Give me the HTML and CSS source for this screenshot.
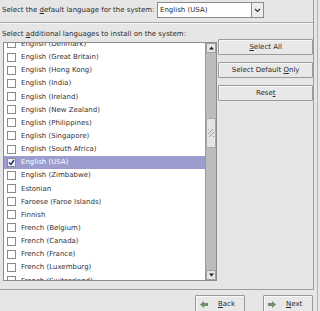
FILE: index.html
```html
<!DOCTYPE html>
<html lang="en">
<head>
  <meta charset="UTF-8">
  <title>Language Support</title>
  <link rel="stylesheet" href="styles.css">
</head>
<body>
  <div class="page">
    <div class="frame">
      <div class="default-row">
        <span class="label">Select the <u>d</u>efault language for the system:</span>
        <div class="combo">
          <div class="combo-text">English (USA)</div>
          <div class="combo-btn">
            <svg width="7" height="5" viewBox="0 0 7 5"><path d="M1 1 L3.5 3.5 L6 1" fill="none" stroke="#333" stroke-width="1.2"/></svg>
          </div>
        </div>
      </div>
      <div class="sep"></div>
      <div class="label additional">Select <u>a</u>dditional languages to install on the system:</div>
      <div class="main">
        <div class="list">
          <div class="rows">
            <div class="rows-inner" id="rows"></div>
          </div>
          <div class="scrollbar">
            <div class="arrow">
              <svg width="5" height="4" viewBox="0 0 5 4"><path d="M0 3.5 L2.5 0.5 L5 3.5 Z" fill="#222"/></svg>
            </div>
            <div class="track">
              <div class="thumb"><div class="grip"></div></div>
            </div>
            <div class="arrow">
              <svg width="5" height="4" viewBox="0 0 5 4"><path d="M0 0.5 L2.5 3.5 L5 0.5 Z" fill="#222"/></svg>
            </div>
          </div>
        </div>
        <div class="actions">
          <button class="btn"><u>S</u>elect All</button>
          <button class="btn">Select Default <u>O</u>nly</button>
          <button class="btn">Rese<u>t</u></button>
        </div>
      </div>
    </div>
    <div class="nav">
      <button class="btn nav-btn">
        <svg width="8" height="7" viewBox="0 0 8 7"><path d="M0 3.5 L4 0 L4 2 L8 2 L8 5 L4 5 L4 7 Z" fill="#6f8f6a"/></svg>
        <span><u>B</u>ack</span>
      </button>
      <button class="btn nav-btn">
        <svg width="8" height="7" viewBox="0 0 8 7"><path d="M8 3.5 L4 0 L4 2 L0 2 L0 5 L4 5 L4 7 Z" fill="#6f8f6a"/></svg>
        <span><u>N</u>ext</span>
      </button>
    </div>
  </div>

  <script>
    const languages = [
      'English (Denmark)', 'English (Great Britain)', 'English (Hong Kong)',
      'English (India)', 'English (Ireland)', 'English (New Zealand)',
      'English (Philippines)', 'English (Singapore)', 'English (South Africa)',
      'English (USA)', 'English (Zimbabwe)', 'Estonian',
      'Faroese (Faroe Islands)', 'Finnish', 'French (Belgium)',
      'French (Canada)', 'French (France)', 'French (Luxemburg)',
      'French (Switzerland)'
    ];
    const rows = document.getElementById('rows');

    languages.forEach(name => {
      const row = document.createElement('div');
      row.className = 'row';
      const box = document.createElement('span');
      box.className = 'check';
      if (name === 'English (USA)') {
        row.classList.add('selected');
        box.innerHTML = '<svg width="7" height="7" viewBox="0 0 7 7"><path d="M1 3.5 L3 5.5 L6 1" fill="none" stroke="#1a2a6a" stroke-width="1.4"/></svg>';
      }
      const text = document.createElement('span');
      text.textContent = name;
      row.appendChild(box);
      row.appendChild(text);
      rows.appendChild(row);
    });
  </script>
</body>
</html>
```

FILE: styles.css
```css
body {
  margin: 0;
  width: 320px;
  height: 311px;
  overflow: hidden;
  background-color: #e6e6e6;
  font-family: "DejaVu Sans", sans-serif;
  font-size: 7px;
  color: #2a2a2a;
}
u {
  text-decoration: underline;
  text-underline-offset: 1px;
}
.page {
  width: 317px;
  border-right: 1px solid #b4b4b4;
}
.frame {
  width: 313px;
  height: 289px;
  border-right: 1px solid #9c9c9c;
  border-bottom: 1px solid #9c9c9c;
  display: flex;
  flex-direction: column;
}
.default-row {
  display: flex;
  align-items: center;
  height: 16px;
  margin-top: 2px;
  padding-left: 2px;
}
.label {
  white-space: nowrap;
}
.combo {
  display: flex;
  margin-left: auto;
  margin-right: 49px;
  height: 16px;
}
.combo-text {
  width: 91px;
  background: #fff;
  border: 1px solid #8c8c8c;
  display: flex;
  align-items: center;
  padding-left: 2px;
}
.combo-btn {
  width: 11px;
  border: 1px solid #8c8c8c;
  border-left: none;
  background: #ececec;
  display: flex;
  align-items: center;
  justify-content: center;
}
.sep {
  margin-top: 4px;
  height: 1px;
  background: #a8a8a8;
  border-bottom: 1px solid #f8f8f8;
}
.additional {
  margin-top: 6px;
  padding-left: 2px;
  height: 8px;
  line-height: 8px;
}
.main {
  display: flex;
  margin-top: 4px;
}
.list {
  margin-left: 3px;
  width: 213px;
  height: 237px;
  border: 1px solid #8c8c8c;
  background: #fff;
  display: flex;
}
.rows {
  flex: 1;
  overflow: hidden;
}
.rows-inner {
  margin-top: -5.6px;
}
.row {
  height: 13.15px;
  display: flex;
  align-items: center;
  gap: 5px;
  padding-left: 3px;
  white-space: nowrap;
  color: #333;
}
.row.selected {
  background: #9c9ccf;
  color: #fff;
}
.check {
  width: 7px;
  height: 7px;
  border: 1px solid #8a8a8a;
  background: #fff;
  display: flex;
  align-items: center;
  justify-content: center;
}
.row.selected .check {
  background: #eef0ff;
}
.scrollbar {
  width: 10px;
  border-left: 1px solid #9a9a9a;
  display: flex;
  flex-direction: column;
  background: #bcbcbc;
}
.arrow {
  height: 8px;
  background: #e6e6e6;
  border: 1px solid #a0a0a0;
  display: flex;
  align-items: center;
  justify-content: center;
}
.track {
  flex: 1;
  padding-top: 65px;
}
.thumb {
  height: 30px;
  background: #e4e4e4;
  border: 1px solid #a8a8a8;
  box-sizing: border-box;
  display: flex;
  align-items: center;
  justify-content: center;
}
.grip {
  width: 6px;
  height: 8px;
  background: repeating-linear-gradient(135deg, #999 0 1px, transparent 1px 3px);
}
.actions {
  display: flex;
  flex-direction: column;
  gap: 7px;
  margin-left: 1px;
  margin-top: -3px;
  width: 95px;
}
.btn {
  height: 16px;
  padding: 0;
  font-family: "DejaVu Sans", sans-serif;
  font-size: 7px;
  color: #2a2a2a;
  background: #e8e8e8;
  border: 1px solid #9a9a9a;
  border-radius: 1px;
  box-shadow: inset 1px 1px 0 #f8f8f8;
}
.nav {
  display: flex;
  gap: 18px;
  padding-left: 195px;
  margin-top: 5px;
}
.nav-btn {
  width: 50px;
  height: 18px;
  display: flex;
  align-items: center;
  gap: 10px;
  padding-left: 4px;
}
```
